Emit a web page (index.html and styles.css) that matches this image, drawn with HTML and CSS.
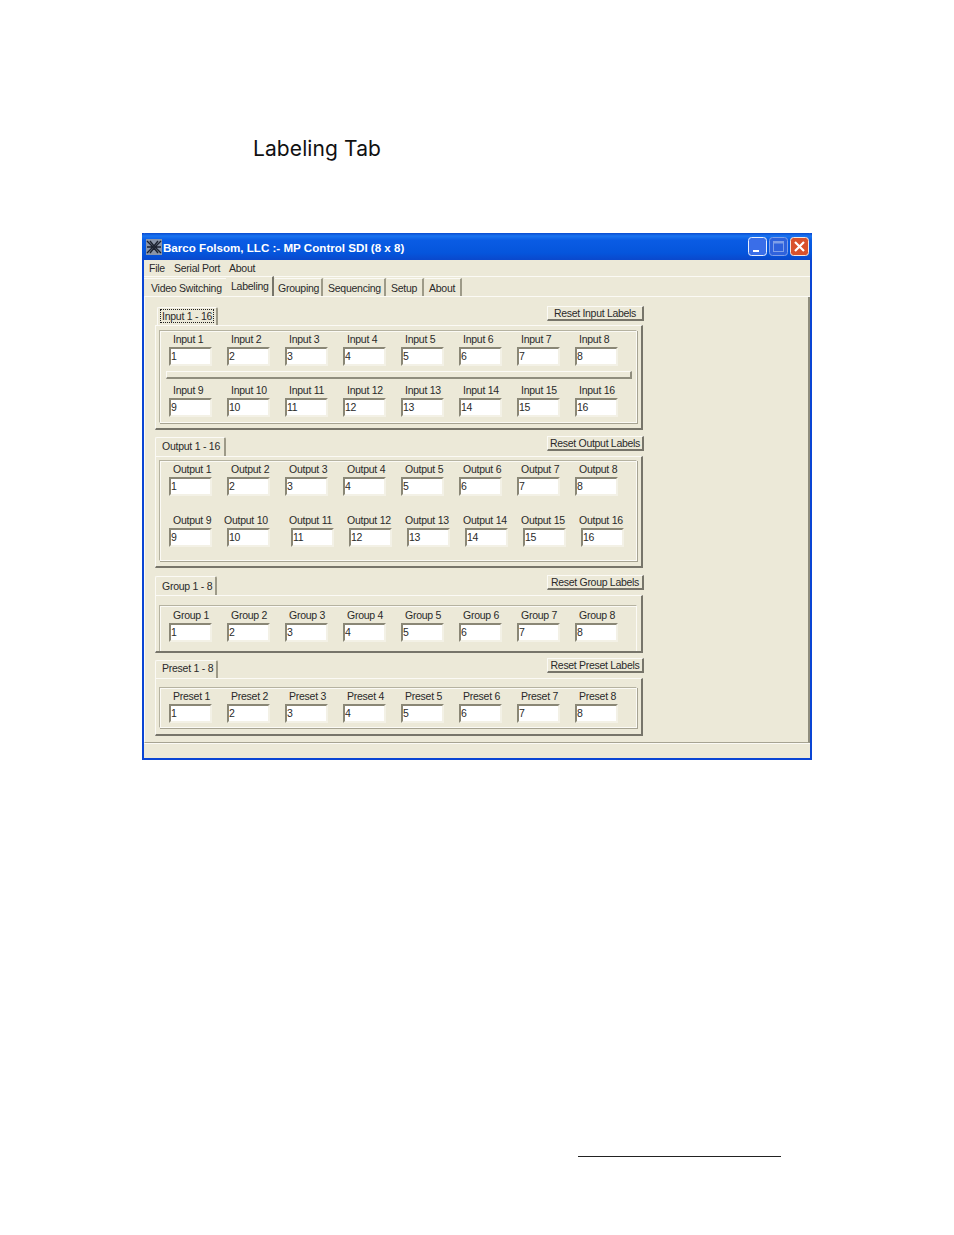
FILE: index.html
```html
<!DOCTYPE html>
<html lang="en">
<head>
	<meta charset="UTF-8">
	<title>Labeling Tab</title>
	<link rel="stylesheet" href="styles.css">
</head>
<body>

	<h1 class="heading">Labeling Tab</h1>

	<div class="window">
		<div class="titlebar">
			<svg class="app-icon" width="16" height="16" viewBox="0 0 16 16">
				<rect width="16" height="16" fill="#8a94a8"/>
				<path d="M1 2l6 6-6 6M15 2l-6 6 6 6M1 8h14M4 2l4 5 4-5M4 14l4-5 4 5" stroke="#1c2230" stroke-width="1.4" fill="none"/>
			</svg>
			<span class="title-text">Barco Folsom, LLC :- MP Control SDI (8 x 8)</span>
			<div class="caption-btns">
				<svg class="caption-btn" width="19" height="19" viewBox="0 0 19 19">
					<rect x=".5" y=".5" width="18" height="18" rx="3" fill="#3a6ee8" stroke="#e8eefc"/>
					<rect x="5" y="13" width="6" height="2" fill="#fff"/>
				</svg>
				<svg class="caption-btn" width="19" height="19" viewBox="0 0 19 19">
					<rect x=".5" y=".5" width="18" height="18" rx="3" fill="#2f62dc" stroke="#7f9fe8"/>
					<rect x="4.5" y="4.5" width="10" height="10" fill="none" stroke="#7f9fe8"/>
					<rect x="4.5" y="4.5" width="10" height="2" fill="#7f9fe8"/>
				</svg>
				<svg class="caption-btn" width="19" height="19" viewBox="0 0 19 19">
					<rect x=".5" y=".5" width="18" height="18" rx="3" fill="#d9512c" stroke="#f4e6e0"/>
					<path d="M5 5l9 9M14 5l-9 9" stroke="#fff" stroke-width="2.2"/>
				</svg>
			</div>
		</div>

		<div class="menubar">
			<span class="menu-file">File</span>
			<span class="menu-port">Serial Port</span>
			<span>About</span>
		</div>

		<div class="tabs">
			<span class="tab tab-video">Video Switching</span>
			<span class="tab tab-active">Labeling</span>
			<span class="tab tab-group">Grouping</span>
			<span class="tab tab-seq">Sequencing</span>
			<span class="tab tab-setup">Setup</span>
			<span class="tab tab-about">About</span>
		</div>

		<div class="content">

			<!-- inputs -->
			<div class="section section-input">
				<div class="section-head">
					<span class="subtab subtab-input"><span class="focus">Input 1 - 16</span></span>
					<button class="reset reset-input">Reset Input Labels</button>
				</div>
				<div class="outer outer-input">
					<div class="inner inner-input">
						<div class="row">
							<div class="cell"><label>Input 1</label><input type="text" value="1"></div>
							<div class="cell"><label>Input 2</label><input type="text" value="2"></div>
							<div class="cell"><label>Input 3</label><input type="text" value="3"></div>
							<div class="cell"><label>Input 4</label><input type="text" value="4"></div>
							<div class="cell"><label>Input 5</label><input type="text" value="5"></div>
							<div class="cell"><label>Input 6</label><input type="text" value="6"></div>
							<div class="cell"><label>Input 7</label><input type="text" value="7"></div>
							<div class="cell"><label>Input 8</label><input type="text" value="8"></div>
						</div>
						<div class="splitter"></div>
						<div class="row">
							<div class="cell"><label>Input 9</label><input type="text" value="9"></div>
							<div class="cell"><label>Input 10</label><input type="text" value="10"></div>
							<div class="cell"><label>Input 11</label><input type="text" value="11"></div>
							<div class="cell"><label>Input 12</label><input type="text" value="12"></div>
							<div class="cell"><label>Input 13</label><input type="text" value="13"></div>
							<div class="cell"><label>Input 14</label><input type="text" value="14"></div>
							<div class="cell"><label>Input 15</label><input type="text" value="15"></div>
							<div class="cell"><label>Input 16</label><input type="text" value="16"></div>
						</div>
					</div>
				</div>
			</div>

			<!-- outputs -->
			<div class="section section-output">
				<div class="section-head">
					<span class="subtab subtab-output">Output 1 - 16</span>
					<button class="reset reset-output">Reset Output Labels</button>
				</div>
				<div class="outer outer-output">
					<div class="inner inner-output">
						<div class="row">
							<div class="cell"><label>Output 1</label><input type="text" value="1"></div>
							<div class="cell"><label>Output 2</label><input type="text" value="2"></div>
							<div class="cell"><label>Output 3</label><input type="text" value="3"></div>
							<div class="cell"><label>Output 4</label><input type="text" value="4"></div>
							<div class="cell"><label>Output 5</label><input type="text" value="5"></div>
							<div class="cell"><label>Output 6</label><input type="text" value="6"></div>
							<div class="cell"><label>Output 7</label><input type="text" value="7"></div>
							<div class="cell"><label>Output 8</label><input type="text" value="8"></div>
						</div>
						<div class="row row-gap row-shifted">
							<div class="cell"><label>Output 9</label><input type="text" value="9"></div>
							<div class="cell"><label class="label-left">Output 10</label><input type="text" value="10"></div>
							<div class="cell"><label class="label-flush">Output 11</label><input type="text" value="11"></div>
							<div class="cell"><label class="label-flush">Output 12</label><input type="text" value="12"></div>
							<div class="cell"><label class="label-flush">Output 13</label><input type="text" value="13"></div>
							<div class="cell"><label class="label-flush">Output 14</label><input type="text" value="14"></div>
							<div class="cell"><label class="label-flush">Output 15</label><input type="text" value="15"></div>
							<div class="cell"><label class="label-flush">Output 16</label><input type="text" value="16"></div>
						</div>
					</div>
				</div>
			</div>

			<!-- groups -->
			<div class="section section-group">
				<div class="section-head">
					<span class="subtab subtab-group">Group 1 - 8</span>
					<button class="reset reset-group">Reset Group Labels</button>
				</div>
				<div class="outer outer-group">
					<div class="inner inner-group">
						<div class="row">
							<div class="cell"><label>Group 1</label><input type="text" value="1"></div>
							<div class="cell"><label>Group 2</label><input type="text" value="2"></div>
							<div class="cell"><label>Group 3</label><input type="text" value="3"></div>
							<div class="cell"><label>Group 4</label><input type="text" value="4"></div>
							<div class="cell"><label>Group 5</label><input type="text" value="5"></div>
							<div class="cell"><label>Group 6</label><input type="text" value="6"></div>
							<div class="cell"><label>Group 7</label><input type="text" value="7"></div>
							<div class="cell"><label>Group 8</label><input type="text" value="8"></div>
						</div>
					</div>
				</div>
			</div>

			<!-- presets -->
			<div class="section section-preset">
				<div class="section-head">
					<span class="subtab subtab-preset">Preset 1 - 8</span>
					<button class="reset reset-preset">Reset Preset Labels</button>
				</div>
				<div class="outer outer-preset">
					<div class="inner inner-preset">
						<div class="row">
							<div class="cell"><label>Preset 1</label><input type="text" value="1"></div>
							<div class="cell"><label>Preset 2</label><input type="text" value="2"></div>
							<div class="cell"><label>Preset 3</label><input type="text" value="3"></div>
							<div class="cell"><label>Preset 4</label><input type="text" value="4"></div>
							<div class="cell"><label>Preset 5</label><input type="text" value="5"></div>
							<div class="cell"><label>Preset 6</label><input type="text" value="6"></div>
							<div class="cell"><label>Preset 7</label><input type="text" value="7"></div>
							<div class="cell"><label>Preset 8</label><input type="text" value="8"></div>
						</div>
					</div>
				</div>
			</div>

		</div>
		<div class="statusbar"></div>
	</div>

	<div class="footer-rule"></div>

</body>
</html>
```

FILE: styles.css
```css
*{
	box-sizing: border-box;
}
html,body{
	height: 1235px;
	overflow: hidden;
}
body{
	margin: 0;
	padding: 0;
	background-color: #fff;
	font-family: "Liberation Sans", Arial, sans-serif;
	font-size: 10.5px;
	letter-spacing: -0.25px;
	color: #2a2a2a;
}

/*page*/
.heading{
	margin: 0 0 0 253px;
	padding-top: 135px;
	height: 233px;
	font-family: "Inter", sans-serif;
	font-size: 21px;
	line-height: 27px;
	font-weight: 400;
	letter-spacing: 0.1px;
	color: #111;
}
.footer-rule{
	margin: 396px 0 0 578px;
	width: 203px;
	height: 1px;
	background-color: #222;
}

/*window*/
.window{
	margin-left: 142px;
	width: 670px;
	height: 527px;
	background-color: #ece9d8;
	border: solid #0a45d4;
	border-width: 0 2px 2px 2px;
	display: flex;
	flex-direction: column;
}
.titlebar{
	height: 27px;
	margin: 0 -2px;
	padding: 0 3px 0 4px;
	display: flex;
	align-items: center;
	gap: 1px;
	border-radius: 3px 3px 0 0;
	background: linear-gradient(#0a4bd0 0, #1a74f0 3px, #0a5ce4 7px, #0555dc 20px, #0a48cc 27px);
	color: #fff;
}
.app-icon{
	flex: none;
}
.title-text{
	padding-top: 2px;
	font-size: 11.6px;
	font-weight: bold;
	letter-spacing: 0;
	color: #fff;
}
.caption-btns{
	margin-left: auto;
	display: flex;
	gap: 2px;
}
.menubar{
	height: 17px;
	padding-left: 5px;
	display: flex;
	align-items: center;
	border-bottom: 1px solid #fbfaf5;
}
.menu-file{
	width: 25px;
}
.menu-port{
	width: 55px;
}

/*main tabs*/
.tabs{
	height: 20px;
	display: flex;
	align-items: flex-end;
	border-bottom: 1px solid #fbfaf5;
}
.tab{
	height: 18px;
	padding-top: 3px;
	border-right: 2px solid #9d9a88;
	border-top: 1px solid #fbfaf5;
	white-space: nowrap;
}
.tab-video{
	width: 82px;
	padding-left: 7px;
	border-right: none;
}
.tab-active{
	width: 48px;
	height: 20px;
	padding: 3px 0 0 5px;
	border-right-color: #77756a;
}
.tab-group{
	width: 48px;
	margin-left: 1px;
	padding-left: 3px;
}
.tab-seq{
	width: 62px;
	margin-left: 1px;
	padding-left: 4px;
}
.tab-setup{
	width: 37px;
	margin-left: 1px;
	padding-left: 4px;
}
.tab-about{
	width: 37px;
	margin-left: 1px;
	padding-left: 4px;
}

/*content area*/
.content{
	flex: 1;
	padding: 10px 0 0 10px;
	border-right: 2px solid #8f8d7d;
	border-left: 1px solid #fbfaf5;
	border-bottom: 1px solid #a6a392;
}
.section{
	width: 489px;
}
.section-head{
	display: flex;
	justify-content: space-between;
}
.subtab{
	display: block;
	height: 18px;
	margin-left: 2px;
	background-color: #ece9d8;
	border: solid #fbfaf5;
	border-width: 1px 2px 0 1px;
	border-right-color: #9d9a88;
	border-radius: 2px 2px 0 0;
	padding: 2px 0 0 4px;
	white-space: nowrap;
}
.subtab-input{
	width: 61px;
	padding: 1px 2px 2px 2px;
}
.focus{
	display: block;
	height: 14px;
	padding-left: 1px;
	line-height: 13px;
	border: 1px dotted #222;
}
.subtab-output{
	width: 71px;
	height: 19px;
	margin-left: 0;
	padding: 2px 0 0 6px;
}
.subtab-group{
	width: 62px;
	height: 19px;
	margin-left: 0;
	padding: 3px 0 0 6px;
}
.subtab-preset{
	width: 63px;
	height: 18px;
	margin-left: 0;
	padding: 1px 0 0 6px;
}
.reset{
	height: 15px;
	padding: 0;
	margin-top: -1px;
	width: 97px;
	background-color: #ece9d8;
	border: 1px solid;
	border-color: #fbfaf5 #77756a #77756a #fbfaf5;
	border-width: 1px 2px 2px 1px;
	font-family: inherit;
	font-size: 10.5px;
	letter-spacing: -0.3px;
	line-height: 11px;
	color: #2a2a2a;
	white-space: nowrap;
}
.reset-preset{
	margin-top: -2px;
}
.outer{
	border: solid #fbfaf5;
	border-width: 1px 2px 2px 1px;
	border-right-color: #77756a;
	border-bottom-color: #77756a;
	width: 488px;
	padding: 4px 0 5px 3px;
}
.inner{
	width: 478px;
	border: 1px solid #b5b2a0;
	border-right-color: #fbfaf5;
	border-bottom-color: #fbfaf5;
	box-shadow: inset 1px 1px 0 #fbfaf5, 1px 1px 0 #a6a392;
	padding: 1px 0 0 9px;
}

/*grid of label fields*/
.row{
	display: grid;
	grid-template-columns: repeat(8, 58px);
}
.cell label{
	display: block;
	height: 16px;
	padding-left: 4px;
	line-height: 16px;
	white-space: nowrap;
}
.cell input{
	display: block;
	width: 43px;
	height: 19px;
	margin: 0;
	padding: 0 0 2px 0;
	background-color: #fff;
	border: 2px solid;
	border-color: #8a8776 #f3f1e6 #f3f1e6 #8a8776;
	font-family: inherit;
	font-size: 10.5px;
	letter-spacing: -0.25px;
	color: #2a2a2a;
	outline: none;
}
.row-gap{
	margin-top: 16px;
}
.row-shifted{
	grid-template-columns: 58px 64px repeat(6, 58px);
}
.label-left{
	margin-left: -7px;
}
.cell .label-flush{
	padding-left: 0;
	margin-left: -2px;
}
.splitter{
	margin: 5px 0 3px -3px;
	width: 466px;
	height: 8px;
	background-color: #ece9d8;
	border: solid #fbfaf5;
	border-width: 1px 2px 2px 1px;
	border-right-color: #8f8d7d;
	border-bottom-color: #8f8d7d;
}

/*section spacing*/
.section-input{
	height: 123px;
}
.inner-input{
	height: 93px;
	padding-top: 0;
}
.section-output{
	margin-top: 7px;
	height: 131px;
}
.outer-output{
	padding-top: 3px;
}
.inner-output{
	height: 101px;
	padding-top: 0;
}
.section-group{
	margin-top: 8px;
	height: 77px;
}
.inner-group{
	height: 46px;
	box-shadow: inset 1px 1px 0 #fbfaf5;
	border-bottom: none;
}
.outer-group{
	padding: 9px 0 0 3px;
}
.section-preset{
	margin-top: 7px;
	height: 76px;
}
.inner-preset{
	height: 41px;
	padding-top: 0;
}
.outer-preset{
	padding: 8px 0 6px 3px;
}
.statusbar{
	height: 15px;
	border-top: 1px solid #fbfaf5;
}
```
